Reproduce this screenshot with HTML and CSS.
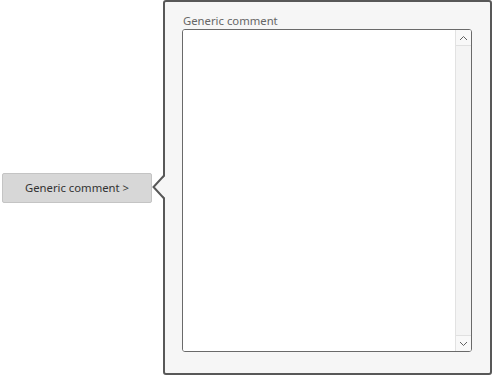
FILE: index.html
```html
<!DOCTYPE html>
<html lang="en">
<head>
    <meta charset="UTF-8">
    <meta name="viewport" content="width=device-width, initial-scale=1.0">
    <title>Generic comment</title>
    <link rel="stylesheet" href="styles.css">
</head>
<body>
    <div class="page">
        <button class="trigger">Generic comment &gt;</button>

        <div class="popup">
            <svg class="pointer" width="13" height="24" viewBox="0 0 13 24">
                <polygon points="14,0 1,12 14,24" fill="#f6f6f6"/>
                <polyline points="12.5,0 1.5,12 12.5,24" fill="none" stroke="#585858" stroke-width="2"/>
            </svg>
            <label class="label" for="comment">Generic comment</label>
            <div class="textbox">
                <textarea id="comment"></textarea>
                <div class="scrollbar">
                    <div class="scroll-btn">
                        <svg width="9" height="6" viewBox="0 0 9 6"><polyline points="1,5 4.5,1.5 8,5" fill="none" stroke="#606060" stroke-width="1"/></svg>
                    </div>
                    <div class="track"></div>
                    <div class="scroll-btn down">
                        <svg width="9" height="6" viewBox="0 0 9 6"><polyline points="1,1 4.5,4.5 8,1" fill="none" stroke="#606060" stroke-width="1"/></svg>
                    </div>
                </div>
            </div>
        </div>
    </div>
</body>
</html>
```

FILE: styles.css
```css
* {
    margin: 0;
    padding: 0;
    box-sizing: border-box;
}

body {
    background-color: white;
    font-family: 'Noto Sans', 'Open Sans', sans-serif;
    font-size: 11.3px;
    color: #333;
}

.page {
    display: flex;
    align-items: center;
    height: 375px;
}

.trigger {
    width: 150px;
    height: 30px;
    margin-left: 2px;
    margin-right: 11px;
    background-color: #d7d7d7;
    border: 1px solid #c4c4c4;
    border-radius: 2px;
    font-family: inherit;
    font-size: 11.3px;
    color: #333;
}

.popup {
    position: relative;
    width: 329px;
    height: 375px;
    background-color: #f6f6f6;
    border: 2px solid #585858;
    border-radius: 3px;
    padding: 10px 18px 21px 17px;
    display: flex;
    flex-direction: column;
}

.pointer {
    position: absolute;
    left: -13px;
    top: calc(50% - 13px);
}

.label {
    display: block;
    line-height: 17px;
    color: #666;
    padding-left: 1px;
}

.textbox {
    flex: 1;
    display: flex;
    background-color: white;
    border: 1px solid #6a6a6a;
    border-radius: 3px;
    overflow: hidden;
}

.textbox textarea {
    flex: 1;
    border: none;
    outline: none;
    resize: none;
    overflow: hidden;
    font-family: inherit;
    font-size: 11.3px;
    padding: 4px;
}

.scrollbar {
    width: 16px;
    display: flex;
    flex-direction: column;
    border-left: 1px solid #e2e2e2;
    background-color: #f4f4f4;
}

.scroll-btn {
    height: 16px;
    display: flex;
    align-items: center;
    justify-content: center;
    background-color: #f8f8f8;
    border-bottom: 1px solid #e0e0e0;
}

.scroll-btn.down {
    border-bottom: none;
    border-top: 1px solid #e0e0e0;
}

.track {
    flex: 1;
}
```
